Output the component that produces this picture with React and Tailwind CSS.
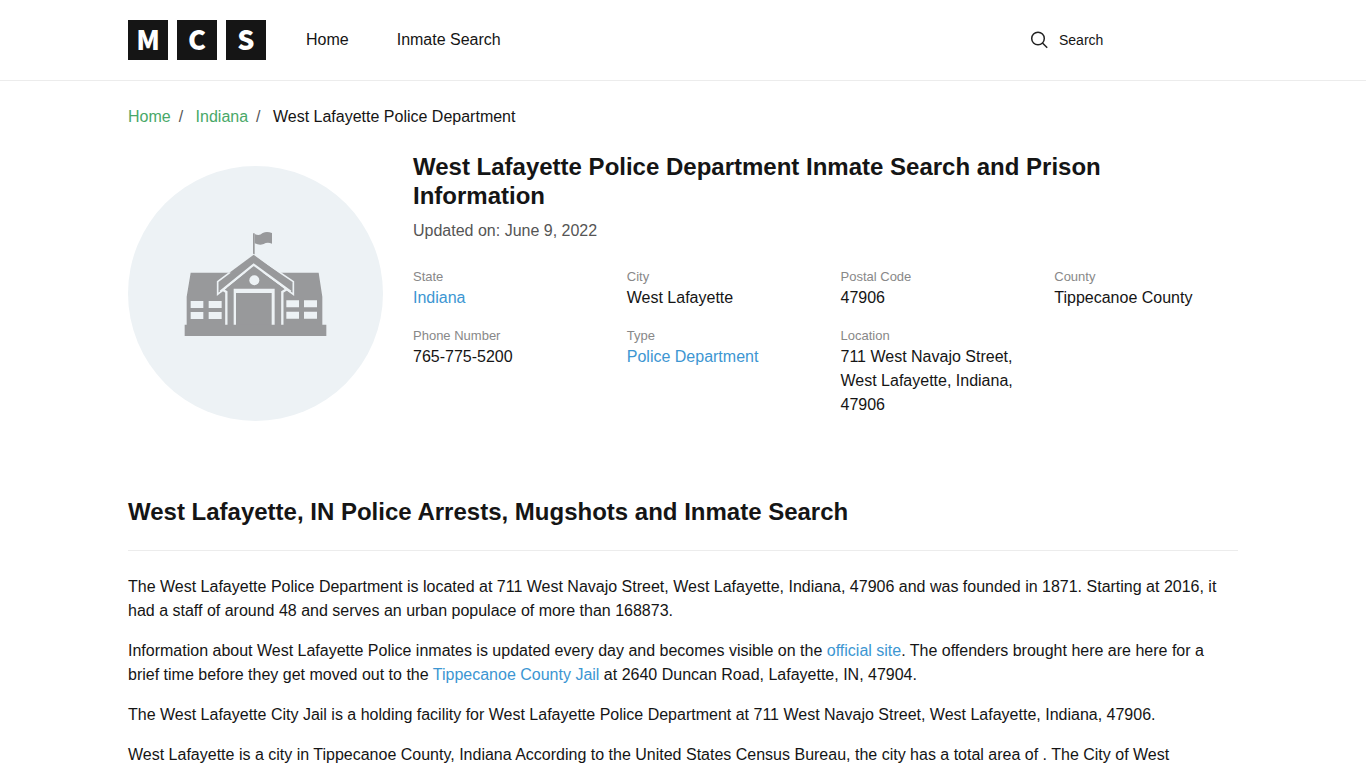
import React from 'react';

const facts = [
  { label: 'State', value: 'Indiana', link: true },
  { label: 'City', value: 'West Lafayette' },
  { label: 'Postal Code', value: '47906' },
  { label: 'County', value: 'Tippecanoe County' },
  { label: 'Phone Number', value: '765-775-5200' },
  { label: 'Type', value: 'Police Department', link: true },
  { label: 'Location', value: '711 West Navajo Street, West Lafayette, Indiana, 47906' },
];

const Logo = () => (
  <a href="#" aria-label="MCS" className="flex gap-[9px]">
    {['M', 'C', 'S'].map((letter) => (
      <span
        key={letter}
        className="flex h-10 w-10 items-center justify-center bg-[#151515] pb-0.5 font-['Noto_Sans_CJK_JP',sans-serif] text-[27px] leading-10 font-black text-white"
      >
        {letter}
      </span>
    ))}
  </a>
);

const SearchIcon = () => (
  <svg className="h-[18px] w-[18px] shrink-0" viewBox="0 0 18 18" fill="none" stroke="#222" strokeWidth="1.5">
    <circle cx="8" cy="7.5" r="6.3" />
    <path d="M12.5 12L17.2 16.8" />
  </svg>
);

const Header = () => (
  <header className="border-b border-[#ececec]">
    <div className="mx-auto flex h-20 max-w-[1140px] items-center justify-between px-[15px]">
      <div className="flex items-center gap-10">
        <Logo />
        <nav className="flex gap-12">
          <a href="#">Home</a>
          <a href="#">Inmate Search</a>
        </nav>
      </div>
      <form className="flex w-52 items-center gap-[11px]">
        <SearchIcon />
        <input
          type="search"
          aria-label="Search"
          placeholder="Search"
          className="w-full min-w-0 text-sm outline-none placeholder:text-[#151515]"
        />
      </form>
    </div>
  </header>
);

const Breadcrumb = () => (
  <nav aria-label="Breadcrumb" className="flex pt-6">
    <a href="#" className="text-[#48a868]">Home</a>
    <span className="mx-2 whitespace-pre text-[#555]">{'/ '}</span>
    <a href="#" className="text-[#48a868]">Indiana</a>
    <span className="mx-2 whitespace-pre text-[#555]">{'/ '}</span>
    <span>West Lafayette Police Department</span>
  </nav>
);

const SchoolPicture = () => (
  <svg className="w-full rounded-full bg-[#edf2f5]" viewBox="-144 -162 765 765" role="img" aria-label="Police department building">
    <g fill="#98999b">
      {/* flag */}
      <path d="M231 40H236V106H231Z" />
      <path d="M236 42C246 46 252 46 260 39C270 35 278 36 288 39V71C278 67 270 68 263 72C253 76 246 74 236 70Z" />
      {/* wings and base */}
      <path d="M44 158H428L439 230V314H451V348H26V314H32V230Z" />
    </g>
    {/* gable */}
    <path d="M233 104L352 185V223L233 136L125 223V185Z" fill="#98999b" stroke="#edf2f5" strokeWidth="5" />
    <path d="M233 104L160 158H306Z" fill="#98999b" />
    <path d="M233 138L320 203V314H152V203Z" fill="#98999b" />
    <path d="M133 215L233 134L344 215" fill="none" stroke="#edf2f5" strokeWidth="7" />
    <path d="M141 210L151 216V314M332 208L319 216V314" fill="none" stroke="#edf2f5" strokeWidth="7" />
    <circle cx="235" cy="181" r="15" fill="#edf2f5" />
    {/* door */}
    <path d="M173 206H296V314H287V219H180V314H173Z" fill="#edf2f5" />
    {/* windows */}
    <g fill="#edf2f5">
      <path d="M44 243H82V264H44ZM98 243H137V264H98ZM44 276H82V297H44ZM98 276H137V297H98Z" />
      <path d="M331 241H369V262H331ZM384 241H423V262H384ZM331 275H369V296H331ZM384 275H423V296H384Z" />
    </g>
  </svg>
);

const Fact = ({ label, value, link }) => (
  <div className="mb-4 px-[15px]">
    <dt className="text-[13px] leading-[19px] text-[#888]">{label}</dt>
    <dd>
      {link ? <a href="#" className="text-[#3c96d2]">{value}</a> : value}
    </dd>
  </div>
);

export default function App() {
  return (
    <div className="bg-white font-['Liberation_Sans',Arial,sans-serif] text-base text-[#151515]">
      <Header />
      <main className="mx-auto max-w-[1140px] px-[15px]">
        <Breadcrumb />

        <section className="mt-[23px] grid grid-cols-4 gap-x-[30px]">
          <div className="pt-[14px]">
            <SchoolPicture />
          </div>
          <div className="col-span-3">
            <h1 className="text-2xl leading-[29px] font-bold">
              West Lafayette Police Department Inmate Search and Prison Information
            </h1>
            <p className="mt-[9px] text-[#555]">Updated on: June 9, 2022</p>
            <dl className="-mx-[15px] mt-6 grid grid-cols-4">
              {facts.map((fact) => (
                <Fact key={fact.label} {...fact} />
              ))}
            </dl>
          </div>
        </section>

        <section className="mt-16">
          <h2 className="border-b border-[#ececec] pb-6 text-2xl leading-[29px] font-bold">
            West Lafayette, IN Police Arrests, Mugshots and Inmate Search
          </h2>
          <div className="mt-6 space-y-4">
            <p>
              The West Lafayette Police Department is located at 711 West Navajo Street, West Lafayette, Indiana, 47906 and
              was founded in 1871. Starting at 2016, it had a staff of around 48 and serves an urban populace of more than
              168873.
            </p>
            <p>
              Information about West Lafayette Police inmates is updated every day and becomes visible on the{' '}
              <a href="#" className="text-[#3c96d2]">official site</a>. The offenders brought here are here for a brief
              time before they get moved out to the{' '}
              <a href="#" className="text-[#3c96d2]">Tippecanoe County Jail</a> at 2640 Duncan Road, Lafayette, IN, 47904.
            </p>
            <p>
              The West Lafayette City Jail is a holding facility for West Lafayette Police Department at 711 West Navajo
              Street, West Lafayette, Indiana, 47906.
            </p>
            <p>
              West Lafayette is a city in Tippecanoe County, Indiana According to the United States Census Bureau, the city
              has a total area of . The City of West
            </p>
          </div>
        </section>
      </main>
    </div>
  );
}
